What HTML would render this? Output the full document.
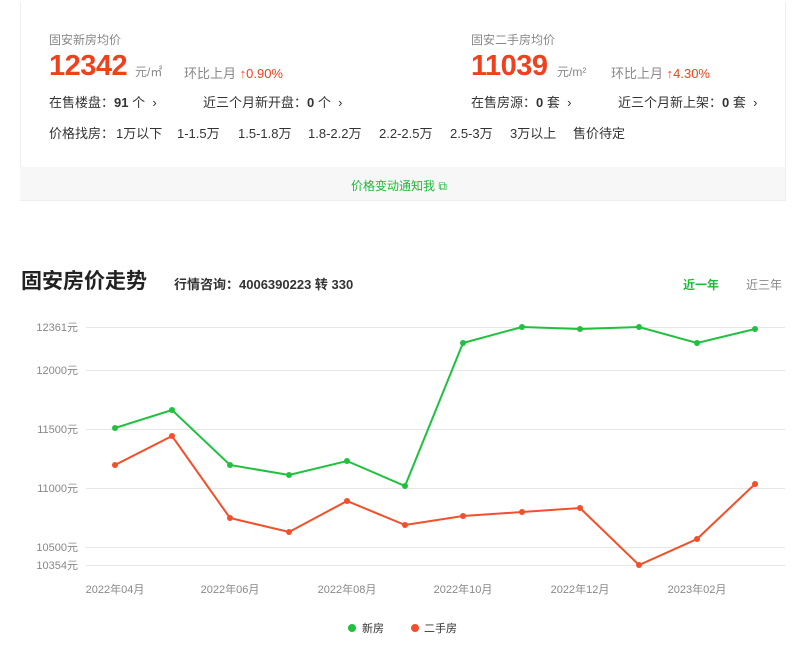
<!DOCTYPE html>
<html><head><meta charset="utf-8"><style>
body{margin:0;width:800px;height:646px;background:#fff;font-family:"Liberation Sans","Noto Sans CJK SC",sans-serif;color:#333;position:relative;overflow:hidden}
.a{position:absolute;white-space:nowrap}
.card{position:absolute;left:20px;top:2px;width:764px;height:198px;border:1px solid #eee;border-top:none}
.foot{position:absolute;left:20px;top:167px;width:765px;height:33px;background:#f7f7f7}
.big{font-size:29px;font-weight:bold;color:#f0411f;letter-spacing:-0.5px}
.g{color:#888;font-size:12px}
.s{font-size:13px;color:#333}
.r{color:#f0411f}
</style></head><body>
<div class="card"></div>
<div class="foot"></div>
<div class="a g" style="left:49px;top:31px;font-size:12px">固安新房均价</div>
<div class="a big" style="left:49px;top:50px">12342</div>
<div class="a g" style="left:135px;top:63px">元/㎡</div>
<div class="a g" style="left:184px;top:63px;font-size:13px">环比上月 <span class="r">↑0.90%</span></div>
<div class="a s" style="left:49px;top:92px">在售楼盘：<b>91</b> 个 &nbsp;›</div>
<div class="a s" style="left:203px;top:92px">近三个月新开盘：<b>0</b> 个 &nbsp;›</div>
<div class="a s" style="left:49px;top:123px">价格找房：</div>
<div class="a s" style="left:116px;top:123px">1万以下</div>
<div class="a s" style="left:177px;top:123px">1-1.5万</div>
<div class="a s" style="left:238px;top:123px">1.5-1.8万</div>
<div class="a s" style="left:308px;top:123px">1.8-2.2万</div>
<div class="a s" style="left:379px;top:123px">2.2-2.5万</div>
<div class="a s" style="left:450px;top:123px">2.5-3万</div>
<div class="a s" style="left:510px;top:123px">3万以上</div>
<div class="a s" style="left:573px;top:123px">售价待定</div>
<div class="a g" style="left:471px;top:31px">固安二手房均价</div>
<div class="a big" style="left:471px;top:50px">11039</div>
<div class="a g" style="left:557px;top:63px">元/m²</div>
<div class="a g" style="left:611px;top:63px;font-size:13px">环比上月 <span class="r">↑4.30%</span></div>
<div class="a s" style="left:471px;top:92px">在售房源：<b>0</b> 套 &nbsp;›</div>
<div class="a s" style="left:618px;top:92px">近三个月新上架：<b>0</b> 套 &nbsp;›</div>
<div class="a" style="left:351px;top:177px;font-size:12px;color:#1fb839">价格变动通知我 ⧉</div>
<div class="a" style="left:21px;top:265px;font-size:21px;font-weight:bold;color:#222">固安房价走势</div>
<div class="a" style="left:174px;top:274px;font-size:13px;font-weight:bold;color:#333">行情咨询：4006390223 转 330</div>
<div class="a" style="left:683px;top:276px;font-size:12px;font-weight:bold;color:#1fb839">近一年</div>
<div class="a" style="left:746px;top:276px;font-size:12px;color:#888">近三年</div>
<svg class="a" style="left:0;top:0" width="800" height="646">
<g stroke="#e6e6e6" stroke-width="1">
<line x1="86" x2="785" y1="327.5" y2="327.5"/><line x1="86" x2="785" y1="370.5" y2="370.5"/><line x1="86" x2="785" y1="429.5" y2="429.5"/><line x1="86" x2="785" y1="488.5" y2="488.5"/><line x1="86" x2="785" y1="547.5" y2="547.5"/><line x1="86" x2="785" y1="565.5" y2="565.5"/>
</g>
<g font-size="11" fill="#888" text-anchor="end" font-family="Liberation Sans,Noto Sans CJK SC,sans-serif">
<text x="78" y="331">12361元</text><text x="78" y="374">12000元</text><text x="78" y="433">11500元</text><text x="78" y="492">11000元</text><text x="78" y="551">10500元</text><text x="78" y="569">10354元</text>
</g>
<g font-size="11" fill="#888" text-anchor="middle" font-family="Liberation Sans,Noto Sans CJK SC,sans-serif">
<text x="115" y="593">2022年04月</text><text x="230" y="593">2022年06月</text><text x="347" y="593">2022年08月</text><text x="463" y="593">2022年10月</text><text x="580" y="593">2022年12月</text><text x="697" y="593">2023年02月</text>
</g>
<polyline fill="none" stroke="#1fc13f" stroke-width="2" points="115,428 172,410 230,465 289,475 347,461 405,486 463,343 522,327 580,329 639,327 697,343 755,329"/>
<polyline fill="none" stroke="#f24f2a" stroke-width="2" points="115,465 172,436 230,518 289,532 347,501 405,525 463,516 522,512 580,508 639,565 697,539 755,484"/>
<g fill="#1fc13f"><circle cx="115" cy="428" r="3"/><circle cx="172" cy="410" r="3"/><circle cx="230" cy="465" r="3"/><circle cx="289" cy="475" r="3"/><circle cx="347" cy="461" r="3"/><circle cx="405" cy="486" r="3"/><circle cx="463" cy="343" r="3"/><circle cx="522" cy="327" r="3"/><circle cx="580" cy="329" r="3"/><circle cx="639" cy="327" r="3"/><circle cx="697" cy="343" r="3"/><circle cx="755" cy="329" r="3"/><circle cx="352" cy="628" r="4"/></g>
<g fill="#f24f2a"><circle cx="115" cy="465" r="3"/><circle cx="172" cy="436" r="3"/><circle cx="230" cy="518" r="3"/><circle cx="289" cy="532" r="3"/><circle cx="347" cy="501" r="3"/><circle cx="405" cy="525" r="3"/><circle cx="463" cy="516" r="3"/><circle cx="522" cy="512" r="3"/><circle cx="580" cy="508" r="3"/><circle cx="639" cy="565" r="3"/><circle cx="697" cy="539" r="3"/><circle cx="755" cy="484" r="3"/><circle cx="415" cy="628" r="4"/></g>
<g font-size="11" fill="#333" font-family="Liberation Sans,Noto Sans CJK SC,sans-serif"><text x="362" y="632">新房</text><text x="424" y="632">二手房</text></g>
</svg>
</body></html>
